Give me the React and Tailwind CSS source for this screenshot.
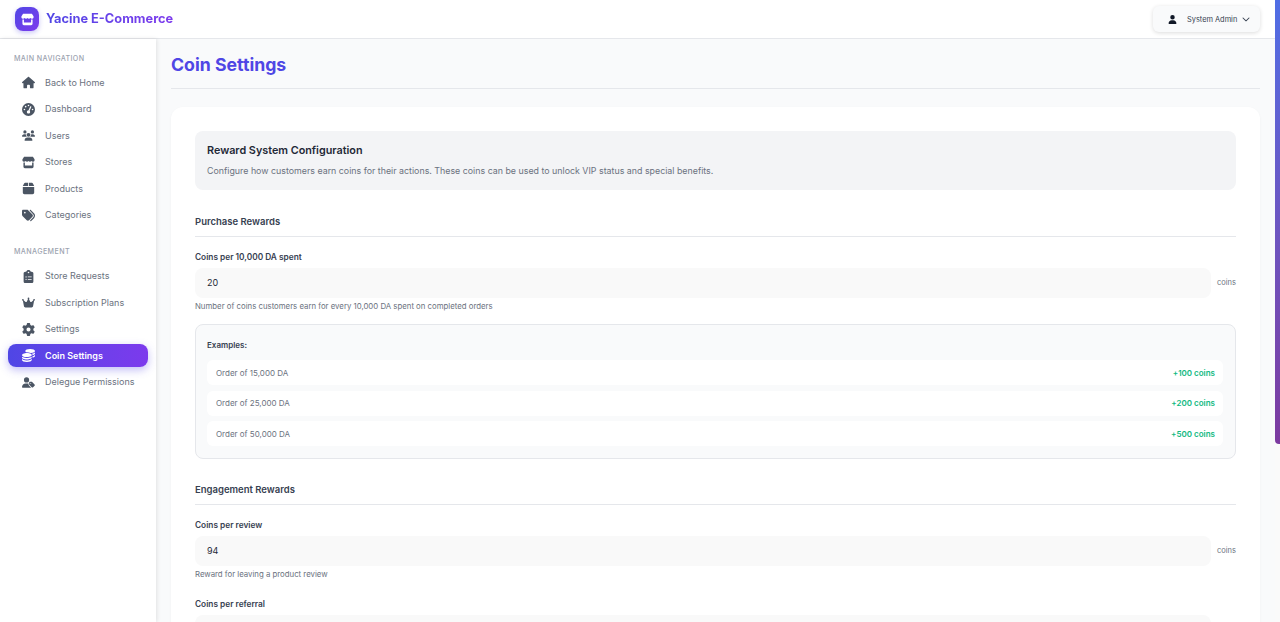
import React from 'react';
import {
    FaHouse, FaGaugeHigh, FaUsers, FaStore, FaBox, FaTags, FaClipboardList,
    FaCrown, FaGear, FaCoins, FaUserTag, FaUser, FaChevronDown,
} from 'react-icons/fa6';

const mainNav = [
    { label: 'Back to Home', icon: FaHouse },
    { label: 'Dashboard', icon: FaGaugeHigh },
    { label: 'Users', icon: FaUsers },
    { label: 'Stores', icon: FaStore },
    { label: 'Products', icon: FaBox },
    { label: 'Categories', icon: FaTags },
];

const managementNav = [
    { label: 'Store Requests', icon: FaClipboardList },
    { label: 'Subscription Plans', icon: FaCrown },
    { label: 'Settings', icon: FaGear },
    { label: 'Coin Settings', icon: FaCoins, active: true },
    { label: 'Delegue Permissions', icon: FaUserTag },
];

const examples = [
    ['Order of 15,000 DA', '+100 coins'],
    ['Order of 25,000 DA', '+200 coins'],
    ['Order of 50,000 DA', '+500 coins'],
];

function NavItem({ item }) {
    const Icon = item.icon;
    return (
        <a
            className={
                item.active
                    ? 'flex items-center h-[23px] mx-2 pl-[14px] rounded-lg text-white font-semibold bg-gradient-to-r from-[#4f46e5] to-[#7c3aed] shadow-[0_3px_8px_rgba(79,70,229,0.35)]'
                    : 'flex items-center h-[23px] mx-2 pl-[14px] rounded-lg text-[#6b7280]'
            }
        >
            <span className={item.active ? 'w-[13px] flex justify-center text-white' : 'w-[13px] flex justify-center text-[#4b5563]'}>
                <Icon size={13} />
            </span>
            <span className="ml-[10px] text-[9px]">{item.label}</span>
        </a>
    );
}

function Field({ label, value, help }) {
    return (
        <div>
            <label className="block text-[8.3px] font-semibold text-[#374151] leading-[12px]">{label}</label>
            <div className="flex items-center mt-[5px]">
                <div className="flex-1 h-[30px] flex items-center pl-[12px] rounded-lg bg-[#f9f9f9] text-[9px] text-[#1f2937]">{value}</div>
                <span className="w-[25px] text-right text-[7.5px] text-[#6b7280]">coins</span>
            </div>
            {help && <p className="mt-[2px] text-[7.8px] leading-[12px] text-[#6b7280]">{help}</p>}
        </div>
    );
}

export default function App() {
    return (
        <div className="relative h-[622px] overflow-hidden bg-[#f9fafb] font-['Inter',sans-serif]">
            <header className="flex items-center justify-between h-[39px] pl-[15px] pr-[20px] bg-white border-b border-[#e5e7eb]">
                <div className="flex items-center gap-[7px]">
                    <div className="flex items-center justify-center w-[24px] h-[24px] rounded-lg bg-gradient-to-br from-[#4f46e5] to-[#7c3aed] shadow-[0_2px_5px_rgba(79,70,229,0.3)] text-white">
                        <FaStore size={13} />
                    </div>
                    <span className="text-[12.8px] font-bold bg-gradient-to-r from-[#4f46e5] to-[#7c3aed] bg-clip-text text-transparent">Yacine E-Commerce</span>
                </div>
                <div className="flex items-center h-[26px] w-[107px] pl-[15px] rounded-md bg-[#f9fafb] shadow-[0_1px_4px_rgba(0,0,0,0.14)]">
                    <FaUser size={9} className="text-[#111827]" />
                    <span className="ml-[10px] mt-[1px] text-[7.4px] text-[#374151]">System Admin</span>
                    <FaChevronDown size={8} className="ml-[5px] text-[#374151]" />
                </div>
            </header>

            <div className="flex h-[583px]">
                <aside className="w-[156px] shrink-0 bg-white shadow-[1px_0_4px_rgba(0,0,0,0.1)]">
                    <h3 className="mt-[15px] ml-[14px] text-[7.1px] leading-[10px] tracking-[0.4px] font-medium text-[#9ca3af]">MAIN NAVIGATION</h3>
                    <nav className="mt-[7px] flex flex-col gap-[3.5px]">
                        {mainNav.map((item) => <NavItem key={item.label} item={item} />)}
                    </nav>
                    <h3 className="mt-[20px] ml-[14px] text-[7.1px] leading-[10px] tracking-[0.4px] font-medium text-[#9ca3af]">MANAGEMENT</h3>
                    <nav className="mt-[8px] flex flex-col gap-[3.5px]">
                        {managementNav.map((item) => <NavItem key={item.label} item={item} />)}
                    </nav>
                </aside>

                <main className="flex-1 pl-[15px] pr-[20px]">
                    <div className="h-[50px] pt-[4px] border-b border-[#e5e7eb] flex items-center">
                        <h1 className="text-[17.7px] font-bold text-[#4f46e5]">Coin Settings</h1>
                    </div>

                    <div className="mt-[18px] px-[24px] pt-[24px] bg-white rounded-xl shadow-[0_1px_3px_rgba(0,0,0,0.04)] h-[600px]">
                        <div className="h-[59px] px-[12px] pt-[12px] rounded-lg bg-[#f3f4f6]">
                            <h2 className="text-[10.8px] leading-[16px] font-semibold text-[#1f2937]">Reward System Configuration</h2>
                            <p className="mt-[6px] text-[8.85px] leading-[12px] text-[#6b7280]">Configure how customers earn coins for their actions. These coins can be used to unlock VIP status and special benefits.</p>
                        </div>

                        <h3 className="mt-[25px] pb-[7px] border-b border-[#e5e7eb] text-[9.5px] leading-[14px] font-semibold text-[#374151]">Purchase Rewards</h3>

                        <div className="mt-[14px]">
                            <Field label="Coins per 10,000 DA spent" value="20" help="Number of coins customers earn for every 10,000 DA spent on completed orders" />
                        </div>

                        <div className="mt-[12px] h-[135px] pl-[11px] pr-[12px] pt-[14px] rounded-lg bg-[#f9fafb] border border-[#e5e7eb]">
                            <div className="text-[8px] leading-[12px] font-semibold text-[#374151]">Examples:</div>
                            <div className="mt-[9px] flex flex-col gap-[5.5px]">
                                {examples.map(([order, coins]) => (
                                    <div key={order} className="flex items-center justify-between h-[25px] pl-[9px] pr-[8px] rounded-md bg-white">
                                        <span className="text-[8px] text-[#6b7280]">{order}</span>
                                        <span className="text-[8px] font-semibold text-[#10b981]">{coins}</span>
                                    </div>
                                ))}
                            </div>
                        </div>

                        <h3 className="mt-[24px] pb-[7px] border-b border-[#e5e7eb] text-[9.5px] leading-[14px] font-semibold text-[#374151]">Engagement Rewards</h3>

                        <div className="mt-[14px]">
                            <Field label="Coins per review" value="94" help="Reward for leaving a product review" />
                        </div>

                        <div className="mt-[18px]">
                            <Field label="Coins per referral" value="" />
                        </div>
                    </div>
                </main>
            </div>

            {/* scrollbar */}
            <div className="absolute top-0 right-0 bottom-0 w-[5px] bg-[#fafafa]">
                <div className="h-[444px] rounded-bl-sm bg-gradient-to-b from-[#4f6ee5] to-[#7c3aa0]" />
            </div>
        </div>
    );
}
